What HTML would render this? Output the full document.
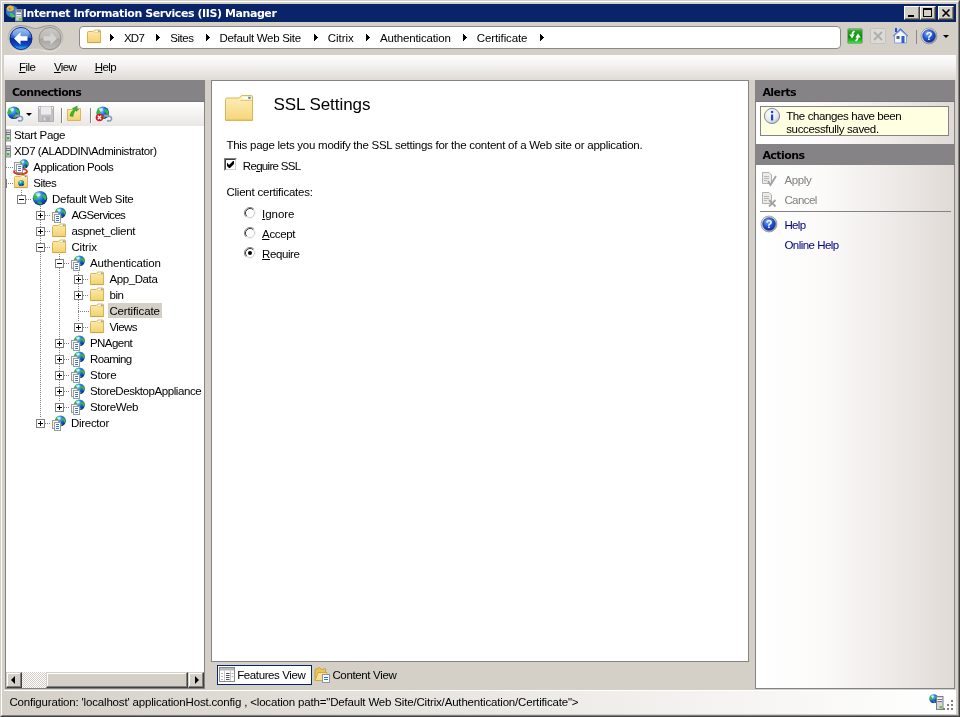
<!DOCTYPE html>
<html><head><meta charset="utf-8"><title>Internet Information Services (IIS) Manager</title>
<style>
html,body{margin:0;padding:0;}
body{width:960px;height:717px;overflow:hidden;background:#d4d0c8;position:relative;font-family:"Liberation Sans",sans-serif;font-size:11.5px;color:#000;}
.abs{position:absolute;}
svg{display:block;overflow:visible;}
.t{position:absolute;white-space:nowrap;line-height:13px;height:13px;margin-top:1px;}
.b{font-family:"DejaVu Sans","Liberation Sans",sans-serif;font-weight:bold;font-size:11px;letter-spacing:-0.45px;}
u{text-decoration:underline;text-underline-offset:1px;}
#frame{position:absolute;left:0;top:0;width:958px;height:715px;border:1px solid;border-color:#d4d0c8 #404040 #404040 #d4d0c8;}
#frame2{position:absolute;left:1px;top:1px;width:956px;height:713px;border:1px solid;border-color:#fff #808080 #808080 #fff;}
#title{position:absolute;left:4px;top:4px;width:952px;height:18px;background:#0a246a;}
.cb{position:absolute;top:6px;width:14px;height:12px;background:#d4d0c8;border:1px solid;border-color:#fff #404040 #404040 #fff;box-shadow:inset -1px -1px 0 #808080;}
#menubar{position:absolute;left:4px;top:55px;width:952px;height:25px;background:linear-gradient(#fdfdfd,#f4f3f2 40%,#dedbd6);}
.hdr{position:absolute;height:21px;background:#858386;}
.tool{position:absolute;background:linear-gradient(#fff,#e9e7e4);}
.hd{position:absolute;height:1px;background-image:repeating-linear-gradient(90deg,#808080 0 1px,transparent 1px 2px);}
.vd{position:absolute;width:1px;background-image:repeating-linear-gradient(180deg,#808080 0 1px,transparent 1px 2px);}
.ex{position:absolute;width:7px;height:7px;border:1px solid #808080;background:#fff;}
.ex i{position:absolute;left:1px;top:3px;width:5px;height:1px;background:#000;}
.ex b{position:absolute;left:3px;top:1px;width:1px;height:5px;background:#000;}
.arr{position:absolute;width:0;height:0;border-left:4px solid #000;border-top:3.5px solid transparent;border-bottom:3.5px solid transparent;top:34px;}
.sep{position:absolute;width:1px;background:#808080;box-shadow:1px 0 0 #fff;}
.sbtn{position:absolute;width:14px;height:14px;background:#d4d0c8;border:1px solid;border-color:#d4d0c8 #404040 #404040 #d4d0c8;box-shadow:inset -1px -1px 0 #808080, inset 1px 1px 0 #fff;}
.link{color:#000080;}
.dis{color:#808080;}
.rb{position:absolute;width:10px;height:10px;border-radius:50%;border:1px solid;border-color:#808080 #fff #fff #808080;background:#fff;box-shadow:inset 1px 1px 0 #404040;}
#root{position:absolute;left:0;top:0;width:960px;height:717px;will-change:transform;}
</style></head><body><div id="root">
<svg width="0" height="0" style="position:absolute">
<defs>
<radialGradient id="gG" cx="0.35" cy="0.3" r="0.75"><stop offset="0" stop-color="#d8f2ff"/><stop offset="0.25" stop-color="#4aa8f4"/><stop offset="0.6" stop-color="#1c56d6"/><stop offset="1" stop-color="#0a2590"/></radialGradient>
<linearGradient id="gF" x1="0" y1="0" x2="0" y2="1"><stop offset="0" stop-color="#fcecb0"/><stop offset="1" stop-color="#f3d171"/></linearGradient>
<linearGradient id="gP" x1="0" y1="0" x2="1" y2="0"><stop offset="0" stop-color="#f4f4f6"/><stop offset="1" stop-color="#ffffff"/></linearGradient>
<radialGradient id="gH" cx="0.4" cy="0.3" r="0.8"><stop offset="0" stop-color="#8fb6ff"/><stop offset="0.5" stop-color="#2458d8"/><stop offset="1" stop-color="#0a2490"/></radialGradient>
<radialGradient id="gI" cx="0.4" cy="0.35" r="0.7"><stop offset="0" stop-color="#ffffff"/><stop offset="0.7" stop-color="#e4e6ee"/><stop offset="1" stop-color="#a8abb8"/></radialGradient>
<linearGradient id="gBk" x1="0" y1="0" x2="0" y2="1"><stop offset="0" stop-color="#7db4f0"/><stop offset="0.45" stop-color="#2a68d0"/><stop offset="0.5" stop-color="#0a2aa0"/><stop offset="0.8" stop-color="#0c48c8"/><stop offset="1" stop-color="#38c8ff"/></linearGradient>
<linearGradient id="gFw" x1="0" y1="0" x2="0" y2="1"><stop offset="0" stop-color="#cccac6"/><stop offset="0.48" stop-color="#bab8b4"/><stop offset="0.52" stop-color="#a6a4a0"/><stop offset="1" stop-color="#c0beba"/></linearGradient>
<linearGradient id="gHalo" x1="0" y1="0" x2="0" y2="1"><stop offset="0" stop-color="#9c9994"/><stop offset="1" stop-color="#e6e4e0"/></linearGradient>
<linearGradient id="gGr" x1="0" y1="0" x2="0" y2="1"><stop offset="0" stop-color="#7ad87a"/><stop offset="0.15" stop-color="#2aa82a"/><stop offset="0.55" stop-color="#0a8a0a"/><stop offset="1" stop-color="#3ae83a"/></linearGradient>

<linearGradient id="gF2" x1="0" y1="0" x2="0" y2="1"><stop offset="0" stop-color="#fdf0be"/><stop offset="0.5" stop-color="#f9e299"/><stop offset="1" stop-color="#f5d57c"/></linearGradient>
<linearGradient id="gRing" x1="0" y1="0" x2="1" y2="1"><stop offset="0" stop-color="#f4f4f8"/><stop offset="0.5" stop-color="#c8cad2"/><stop offset="1" stop-color="#8e909c"/></linearGradient>
<symbol id="globe" viewBox="0 0 16 16">
<circle cx="8" cy="8.2" r="7.2" fill="url(#gG)"/>
<path d="M3.2 3.6 C4.5 2.4 6.2 2.2 6.6 3 C7 4 5.6 4.6 5.2 5.8 C4.8 7 6 7.6 5.4 8.8 C4.8 9.8 3.4 9.2 2.6 10.4 C1.6 8.4 1.8 5.4 3.2 3.6 Z" fill="#2fc030"/>
<path d="M10.6 4.2 C11.8 3.8 13.4 4.8 14 6.4 C14.6 8 14.2 9.6 13.4 10 C12.4 10.2 12.6 8.6 11.6 7.8 C10.6 7 9.8 6.4 10 5.4 Z" fill="#2fc030"/>
<path d="M5.4 11.6 C6.6 11 8.4 11.6 9.6 12.4 C10.4 13 10 14 8.8 14.6 C7.4 14.8 5.6 13.6 5.4 11.6 Z" fill="#28b028"/>
<ellipse cx="6" cy="4.4" rx="2.6" ry="1.8" fill="#fff" opacity="0.55"/>
</symbol>

<symbol id="sglobe" viewBox="0 0 12 12">
<circle cx="6" cy="6" r="5.6" fill="url(#gG)"/>
<path d="M1.6 3 C2.6 1.6 4.2 1.2 4.6 2 C4.8 3 3.8 3.4 3.6 4.4 C3.4 5.4 4.2 6 3.6 6.8 C3 7.4 2 7 1 7.6 C0.4 6 0.6 4.2 1.6 3 Z" fill="#2fc030"/>
<path d="M8.2 2.6 C9.4 2.4 10.6 3.4 11 4.8 C11.4 6.2 11 7.6 10.2 7.8 C9.4 7.8 9.6 6.4 8.8 5.8 C8 5.2 7.4 4.6 7.6 3.6 Z" fill="#2fc030"/>
<path d="M5.6 8.8 C6.6 8.6 7.8 9.2 8.2 10 C8.2 10.8 7.4 11.2 6.4 11.2 C5.6 10.6 5.2 9.6 5.6 8.8 Z" fill="#28b028"/>
<ellipse cx="4.4" cy="3" rx="2" ry="1.3" fill="#fff" opacity="0.6"/>
</symbol>

<symbol id="fold" viewBox="0 0 16 16">
<path d="M1.5 4.5 Q1.5 3.5 2.5 3.5 L6.8 3.5 Q7.6 3.5 8 2.8 Q8.4 2 9.2 2 L13.5 2 Q14.5 2 14.5 3 L14.5 14.5 L1.5 14.5 Z" fill="url(#gF)" stroke="#dbb252" stroke-width="1"/>
<path d="M8.2 4.6 L14 4.6" stroke="#e9c76c" stroke-width="0.8" opacity="0.8"/>
<rect x="9.4" y="2.8" width="2.6" height="1" fill="#fff"/>
<rect x="12" y="2.8" width="1.6" height="1" fill="#3f86e8"/>
<path d="M1.5 14.6 H14.5" stroke="#c9a24a" stroke-width="0.9"/>
</symbol>

<symbol id="app" viewBox="0 0 16 17">
<svg x="3.6" y="1" width="11.6" height="11.6" viewBox="0 0 12 12"><use href="#sglobe"/></svg>
<rect x="1.5" y="6.5" width="6" height="8" fill="#fbf6e6" stroke="#9a9aa6" stroke-width="1"/>
<rect x="3.5" y="8.5" width="6" height="8" fill="#fff" stroke="#9a9aa6" stroke-width="1"/>
<path d="M5 10.5 H8 M5 12.5 H8 M5 14.5 H8" stroke="#2f7be0" stroke-width="1"/>
</symbol>

<symbol id="pool" viewBox="0 0 16 17">
<svg x="6" y="1" width="10" height="10" viewBox="0 0 12 12"><use href="#sglobe"/></svg>
<ellipse cx="7.5" cy="13.6" rx="6.6" ry="2.6" fill="none" stroke="#e03818" stroke-width="1.6"/>
<rect x="1.5" y="4.5" width="6" height="8" fill="#f4f4f8" stroke="#9a9aa6"/>
<rect x="3.5" y="6.5" width="6" height="8" fill="#fff" stroke="#9a9aa6"/>
<path d="M5 8.5 H8 M5 10.5 H8 M5 12.5 H8" stroke="#2f7be0" stroke-width="1"/>
<path d="M1.2 13.2 Q2 16 7.5 16.2 Q13 16 13.9 13.2" fill="none" stroke="#e03818" stroke-width="1.5"/>
</symbol>

<symbol id="sites" viewBox="0 0 16 16">
<path d="M1.5 3.3 Q1.5 2.5 2.3 2.5 L7.2 2.5 L8.4 1.5 L13.7 1.5 Q14.5 1.5 14.5 2.3 L14.5 13.5 L1.5 13.5 Z" fill="url(#gF)" stroke="#dcb65a" stroke-width="1"/>
<rect x="9.2" y="2" width="2.6" height="1" fill="#fff"/>
<rect x="11.8" y="2" width="1.6" height="1" fill="#3f86e8"/>
<path d="M1.5 13.6 H14.5" stroke="#c9a24a" stroke-width="0.9"/>
<svg x="5" y="6" width="6.4" height="6.4" viewBox="0 0 12 12"><use href="#sglobe"/></svg>
</symbol>

<symbol id="srv" viewBox="0 0 5 16">
<rect x="0" y="4" width="4.5" height="11" fill="#d8d8dc" stroke="#8a8a92" stroke-width="1"/>
<path d="M0 6.5 H4 M0 8.5 H4" stroke="#707078" stroke-width="1"/>
<rect x="1" y="11" width="2.4" height="2.4" fill="#30c020"/>
</symbol>
</defs>
</svg>
<div id="frame"></div><div id="frame2"></div>
<div id="title"></div>
<svg class="abs" style="left:6px;top:5px" width="17" height="17" viewBox="0 0 17 17">
<circle cx="6" cy="6.5" r="6" fill="#3a78d8"/>
<path d="M0.4 4 Q1 0.8 4 0.3 L7.5 1.5 L8 5 L4.5 6.5 L1.5 5.5 Z" fill="#f0b428"/>
<path d="M2.5 3 L4 3 L5 4.5 L3.5 5 Z" fill="#38a0d8"/>
<path d="M3.5 8.5 Q5 7.5 7 9 L9.5 11.5 Q8 12.8 6 12.4 Q4 11 3.5 8.5 Z" fill="#40c840"/>
<path d="M9.5 3.5 Q11 4 11.6 6 L10 6 Z" fill="#40c840"/>
<rect x="9.5" y="4.5" width="6.5" height="11.5" fill="#c4c8d0" stroke="#8a8e9a"/>
<path d="M10.5 6 H15" stroke="#4a5060" stroke-width="1.2"/><path d="M10.5 8.5 H15 M10.5 10.5 H15" stroke="#eef0f4"/><path d="M10.5 9.5 H15" stroke="#8a8e9a"/>
<rect x="13" y="13" width="2.4" height="2.4" fill="#50e020"/>
</svg>
<div class="t b" style="left:22.8px;top:6px;color:#fff;letter-spacing:-0.422px;">Internet Information Services (IIS) Manager</div>
<div class="cb" style="left:904px"><div class="abs" style="left:3px;top:8px;width:6px;height:2px;background:#000"></div></div>
<div class="cb" style="left:920px"><div class="abs" style="left:2px;top:1px;width:7px;height:6px;border:1px solid #000;border-top-width:2px"></div></div>
<div class="cb" style="left:938px"><svg class="abs" style="left:3px;top:2px" width="8" height="8"><path d="M0.5 0.5 L7.5 7.5 M7.5 0.5 L0.5 7.5" stroke="#000" stroke-width="1.6"/></svg></div>

<!-- nav buttons -->
<svg class="abs" style="left:6px;top:24px" width="60" height="30" viewBox="0 0 60 30">
<path d="M15 1.5 C22 1.5 24 4.5 29.5 4.5 C35 4.5 37 1.5 44 1.5 A13 13 0 0 1 44 27.5 C37 27.5 35 25 29.5 25 C24 25 22 27.5 15 27.5 A13 13 0 0 1 15 1.5 Z" fill="#c9c5be" stroke="url(#gHalo)" stroke-width="1.2"/>
<circle cx="15" cy="14.5" r="11" fill="url(#gBk)" stroke="#0a2a8a" stroke-width="1"/>
<ellipse cx="15" cy="9" rx="8.5" ry="5" fill="#fff" opacity="0.25"/>
<path d="M8 14.5 L14.5 8.2 L14.5 12.3 L21.5 12.3 L21.5 16.7 L14.5 16.7 L14.5 20.8 Z" fill="#fff"/>
<circle cx="44" cy="14.5" r="11" fill="url(#gFw)" stroke="#959390" stroke-width="1"/>
<path d="M51 14.5 L44.5 8.2 L44.5 12.3 L37.5 12.3 L37.5 16.7 L44.5 16.7 L44.5 20.8 Z" fill="#d6d4d0"/>
</svg>

<!-- address box -->
<div class="abs" style="left:79px;top:26px;width:760px;height:21px;background:#fff;border:1px solid #8a8a8a;border-radius:4px;"></div>
<svg class="abs" style="left:86px;top:28px" width="16" height="16"><use href="#fold"/></svg>
<svg class="abs" style="left:110px;top:34px" width="4" height="7" shape-rendering="crispEdges"><path d="M0 0 L4 3.5 L0 7 Z" fill="#000"/></svg>
<div class="t" style="left:123.9px;top:31px;letter-spacing:-0.708px;">XD7</div>
<svg class="abs" style="left:156px;top:34px" width="4" height="7" shape-rendering="crispEdges"><path d="M0 0 L4 3.5 L0 7 Z" fill="#000"/></svg>
<div class="t" style="left:170.2px;top:31px;letter-spacing:-0.466px;">Sites</div>
<svg class="abs" style="left:206px;top:34px" width="4" height="7" shape-rendering="crispEdges"><path d="M0 0 L4 3.5 L0 7 Z" fill="#000"/></svg>
<div class="t" style="left:219.4px;top:31px;letter-spacing:-0.287px;">Default Web Site</div>
<svg class="abs" style="left:314px;top:34px" width="4" height="7" shape-rendering="crispEdges"><path d="M0 0 L4 3.5 L0 7 Z" fill="#000"/></svg>
<div class="t" style="left:327.8px;top:31px;letter-spacing:-0.034px;">Citrix</div>
<svg class="abs" style="left:366px;top:34px" width="4" height="7" shape-rendering="crispEdges"><path d="M0 0 L4 3.5 L0 7 Z" fill="#000"/></svg>
<div class="t" style="left:380.1px;top:31px;letter-spacing:-0.164px;">Authentication</div>
<svg class="abs" style="left:463px;top:34px" width="4" height="7" shape-rendering="crispEdges"><path d="M0 0 L4 3.5 L0 7 Z" fill="#000"/></svg>
<div class="t" style="left:476.8px;top:31px;letter-spacing:-0.107px;">Certificate</div>
<svg class="abs" style="left:540px;top:34px" width="4" height="7" shape-rendering="crispEdges"><path d="M0 0 L4 3.5 L0 7 Z" fill="#000"/></svg>

<!-- nav right icons -->
<svg class="abs" style="left:847px;top:28px" width="16" height="16" viewBox="0 0 16 16">
<rect x="0.5" y="0.5" width="15" height="15" rx="1.5" fill="url(#gGr)" stroke="#8fa88f"/>
<path d="M6.8 2.6 Q4.4 4 4.4 6.6 L2.2 6.6 L5 10.4 L7.8 6.6 L6.2 6.6 Q6.2 4.8 8 3.8 Z" fill="#fff"/>
<path d="M9.2 13.4 Q11.6 12 11.6 9.4 L13.8 9.4 L11 5.6 L8.2 9.4 L9.8 9.4 Q9.8 11.2 8 12.2 Z" fill="#fff"/>
</svg>
<svg class="abs" style="left:870px;top:28px" width="16" height="16" viewBox="0 0 16 16">
<rect x="0.5" y="0.5" width="15" height="15" rx="1.5" fill="#dcdad6" stroke="#c4c2be"/>
<path d="M4 4 L12 12 M12 4 L4 12" stroke="#b0aeaa" stroke-width="2"/>
</svg>
<svg class="abs" style="left:892px;top:27px" width="17" height="17" viewBox="0 0 17 17">
<rect x="3" y="1" width="2" height="4" fill="#2a50d0"/>
<path d="M8.5 1.2 L0.8 9 L2 9.6 L8.5 3.4 L15 9.6 L16.2 9 Z" fill="#3a68e0"/>
<path d="M2.5 8.6 L8.5 3.2 L14.5 8.6 L14.5 16 L2.5 16 Z" fill="#f4f6fc" stroke="#8aa0d8" stroke-width="1"/>
<rect x="4.5" y="9" width="3" height="3" fill="#586078"/>
<rect x="9.5" y="9" width="3" height="7" fill="#2a60c8"/>
</svg>
<div class="abs" style="left:916px;top:30px;width:1px;height:14px;background:#8a8a8a;"></div>
<svg class="abs" style="left:920px;top:27px" width="18" height="18" viewBox="0 0 18 18">
<circle cx="9" cy="9" r="8" fill="url(#gRing)"/><circle cx="9" cy="9" r="8" fill="none" stroke="#8a8c96" stroke-width="0.7"/>
<circle cx="9" cy="9" r="6.3" fill="url(#gH)" stroke="#1a2c80" stroke-width="0.6"/>
<text x="9" y="12.9" text-anchor="middle" font-family="Liberation Sans,sans-serif" font-weight="bold" font-size="11" fill="#fff">?</text>
</svg>
<div class="abs" style="left:943px;top:35px;width:0;height:0;border-top:3px solid #000;border-left:3px solid transparent;border-right:3px solid transparent;"></div>

<div id="menubar"></div>
<div class="t" style="left:19.0px;top:60px;letter-spacing:-0.537px;"><u>F</u>ile</div>
<div class="t" style="left:54.0px;top:60px;letter-spacing:-0.609px;"><u>V</u>iew</div>
<div class="t" style="left:94.7px;top:60px;letter-spacing:-0.58px;"><u>H</u>elp</div>

<!-- left panel -->
<div class="abs" style="left:5px;top:80px;width:200px;height:609px;background:#fff;border:1px solid #848284;border-top:0;box-sizing:border-box;"></div>
<div class="hdr" style="left:5px;top:80px;width:200px;height:22px;border-bottom:1px solid #767477;box-sizing:border-box;"></div>
<div class="t b" style="left:11.9px;top:85px;letter-spacing:-0.632px;">Connections</div>
<div class="tool" style="left:6px;top:102px;width:198px;height:24px;"></div>
<!-- toolbar icons -->
<svg class="abs" style="left:7px;top:106px" width="18" height="17" viewBox="0 0 18 17">
<svg x="0" y="0" width="13.5" height="13.5" viewBox="0 0 12 12"><use href="#sglobe"/></svg>
<path d="M8 8.5 L12.5 8.5 L12.5 11 L8 11 Z" fill="#98a4b8" stroke="#6a7894" stroke-width="0.8"/>
<path d="M12.5 10 Q16 10.5 15.5 13.5 Q14.5 15.8 11 14.5" fill="none" stroke="#7f9cc8" stroke-width="1.6"/>
</svg>
<div class="abs" style="left:26px;top:113px;width:0;height:0;border-top:3px solid #000;border-left:3px solid transparent;border-right:3px solid transparent;"></div>
<svg class="abs" style="left:38px;top:106px" width="16" height="16" viewBox="0 0 16 16">
<path d="M0.5 0.5 H15.5 V15.5 H0.5 Z" fill="#c4c2c4" stroke="#b0aeb0"/>
<rect x="3" y="0.5" width="10" height="8" fill="#ecebee"/>
<rect x="4" y="10.5" width="8" height="5" fill="#b4b2b4"/>
<rect x="5.5" y="11.5" width="2" height="3" fill="#dcdadc"/>
<rect x="1" y="1" width="1" height="1.5" fill="#fff"/><rect x="14" y="1" width="1" height="1.5" fill="#fff"/>
</svg>
<div class="sep" style="left:61px;top:108px;height:15px;"></div>
<svg class="abs" style="left:66px;top:105px" width="16" height="17" viewBox="0 0 16 17">
<path d="M1.5 4.5 L7 4.5 L8 3.5 L14.5 3.5 L14.5 15.5 L1.5 15.5 Z" fill="url(#gF)" stroke="#dcb65a"/>
<rect x="10" y="4.2" width="3" height="1" fill="#3f86e8"/>
<path d="M4 11 C4.5 7 6.5 5.5 8 4.5 L6.4 3.4 L11.2 1 L11 6.4 L9.6 5.4 C8.4 6.6 7.4 8.4 7 11.4 Z" fill="#3cb828" stroke="#2a9018" stroke-width="0.5"/>
</svg>
<div class="sep" style="left:90px;top:108px;height:15px;"></div>
<svg class="abs" style="left:95px;top:106px" width="18" height="17" viewBox="0 0 18 17">
<svg x="1" y="0" width="13.5" height="13.5" viewBox="0 0 12 12"><use href="#sglobe"/></svg>
<path d="M9 8.5 L13.5 8.5 L13.5 11 L9 11 Z" fill="#98a4b8" stroke="#6a7894" stroke-width="0.8"/>
<path d="M13.5 10 Q17 10.5 16.5 13.5 Q15.5 15.8 12 14.5" fill="none" stroke="#7f9cc8" stroke-width="1.6"/>
<circle cx="4.5" cy="11.5" r="3.8" fill="#d81828"/>
<path d="M2.8 9.8 L6.2 13.2 M6.2 9.8 L2.8 13.2" stroke="#fff" stroke-width="1.3"/>
</svg>

<div class="abs" style="left:6px;top:179px;width:1px;height:9px;background:#808080;"></div>
<div class="hd" style="left:6px;top:167px;width:7px"></div>
<div class="hd" style="left:6px;top:183px;width:7px"></div>
<div class="vd" style="left:21px;top:190px;height:5px"></div>
<div class="hd" style="left:26px;top:199px;width:6px"></div>
<div class="vd" style="left:40px;top:206px;height:212px"></div>
<div class="hd" style="left:45px;top:215px;width:6px"></div>
<div class="hd" style="left:45px;top:231px;width:6px"></div>
<div class="hd" style="left:45px;top:247px;width:6px"></div>
<div class="hd" style="left:45px;top:423px;width:6px"></div>
<div class="vd" style="left:59px;top:254px;height:148px"></div>
<div class="hd" style="left:64px;top:263px;width:6px"></div>
<div class="hd" style="left:64px;top:343px;width:6px"></div>
<div class="hd" style="left:64px;top:359px;width:6px"></div>
<div class="hd" style="left:64px;top:375px;width:6px"></div>
<div class="hd" style="left:64px;top:391px;width:6px"></div>
<div class="hd" style="left:64px;top:407px;width:6px"></div>
<div class="vd" style="left:78px;top:270px;height:52px"></div>
<div class="hd" style="left:83px;top:279px;width:6px"></div>
<div class="hd" style="left:83px;top:295px;width:6px"></div>
<div class="hd" style="left:83px;top:327px;width:6px"></div>
<div class="hd" style="left:78px;top:311px;width:11px"></div>
<svg class="abs" style="left:6px;top:126px" width="5" height="16"><use href="#srv"/></svg>
<div class="t" style="left:14.0px;top:128px;letter-spacing:-0.314px;">Start Page</div>
<svg class="abs" style="left:6px;top:142px" width="5" height="16"><use href="#srv"/></svg>
<div class="t" style="left:14.0px;top:144px;letter-spacing:-0.423px;">XD7 (ALADDIN&#92;Administrator)</div>
<svg class="abs" style="left:13px;top:158px" width="16" height="17"><use href="#pool"/></svg>
<div class="t" style="left:33.3px;top:160px;letter-spacing:-0.478px;">Application Pools</div>
<svg class="abs" style="left:13px;top:174px" width="16" height="16"><use href="#sites"/></svg>
<div class="t" style="left:33.3px;top:176px;letter-spacing:-0.556px;">Sites</div>
<svg class="abs" style="left:32px;top:190px" width="16" height="16"><use href="#globe"/></svg>
<div class="ex" style="left:17px;top:195px"><i></i></div>
<div class="t" style="left:52.1px;top:192px;letter-spacing:-0.3px;">Default Web Site</div>
<svg class="abs" style="left:51px;top:206px" width="16" height="17"><use href="#app"/></svg>
<div class="ex" style="left:36px;top:211px"><i></i><b></b></div>
<div class="t" style="left:71.4px;top:208px;letter-spacing:-0.692px;">AGServices</div>
<svg class="abs" style="left:51px;top:222px" width="16" height="16"><use href="#fold"/></svg>
<div class="ex" style="left:36px;top:227px"><i></i><b></b></div>
<div class="t" style="left:71.4px;top:224px;letter-spacing:-0.306px;">aspnet_client</div>
<svg class="abs" style="left:51px;top:238px" width="16" height="16"><use href="#fold"/></svg>
<div class="ex" style="left:36px;top:243px"><i></i></div>
<div class="t" style="left:71.4px;top:240px;letter-spacing:-0.134px;">Citrix</div>
<svg class="abs" style="left:70px;top:254px" width="16" height="17"><use href="#app"/></svg>
<div class="ex" style="left:55px;top:259px"><i></i></div>
<div class="t" style="left:90.0px;top:256px;letter-spacing:-0.156px;">Authentication</div>
<svg class="abs" style="left:89px;top:270px" width="16" height="16"><use href="#fold"/></svg>
<div class="ex" style="left:74px;top:275px"><i></i><b></b></div>
<div class="t" style="left:109.4px;top:272px;letter-spacing:-0.395px;">App_Data</div>
<svg class="abs" style="left:89px;top:286px" width="16" height="16"><use href="#fold"/></svg>
<div class="ex" style="left:74px;top:291px"><i></i><b></b></div>
<div class="t" style="left:109.4px;top:288px;letter-spacing:-0.386px;">bin</div>
<div class="abs" style="left:108px;top:303px;width:54px;height:15px;background:#d4d0c8;"></div>
<svg class="abs" style="left:89px;top:302px" width="16" height="16"><use href="#fold"/></svg>
<div class="t" style="left:109.4px;top:304px;letter-spacing:-0.126px;">Certificate</div>
<svg class="abs" style="left:89px;top:318px" width="16" height="16"><use href="#fold"/></svg>
<div class="ex" style="left:74px;top:323px"><i></i><b></b></div>
<div class="t" style="left:109.4px;top:320px;letter-spacing:-0.614px;">Views</div>
<svg class="abs" style="left:70px;top:334px" width="16" height="17"><use href="#app"/></svg>
<div class="ex" style="left:55px;top:339px"><i></i><b></b></div>
<div class="t" style="left:90.0px;top:336px;letter-spacing:-0.562px;">PNAgent</div>
<svg class="abs" style="left:70px;top:350px" width="16" height="17"><use href="#app"/></svg>
<div class="ex" style="left:55px;top:355px"><i></i><b></b></div>
<div class="t" style="left:90.0px;top:352px;letter-spacing:-0.647px;">Roaming</div>
<svg class="abs" style="left:70px;top:366px" width="16" height="17"><use href="#app"/></svg>
<div class="ex" style="left:55px;top:371px"><i></i><b></b></div>
<div class="t" style="left:90.0px;top:368px;letter-spacing:-0.22px;">Store</div>
<svg class="abs" style="left:70px;top:382px" width="16" height="17"><use href="#app"/></svg>
<div class="ex" style="left:55px;top:387px"><i></i><b></b></div>
<div class="t" style="left:90.0px;top:384px;letter-spacing:-0.428px;">StoreDesktopAppliance</div>
<svg class="abs" style="left:70px;top:398px" width="16" height="17"><use href="#app"/></svg>
<div class="ex" style="left:55px;top:403px"><i></i><b></b></div>
<div class="t" style="left:90.0px;top:400px;letter-spacing:-0.355px;">StoreWeb</div>
<svg class="abs" style="left:51px;top:414px" width="16" height="17"><use href="#app"/></svg>
<div class="ex" style="left:36px;top:419px"><i></i><b></b></div>
<div class="t" style="left:70.9px;top:416px;letter-spacing:-0.271px;">Director</div>

<!-- h scrollbar -->
<div class="abs" style="left:6px;top:672px;width:198px;height:16px;background:#e9e7e3;background-image:repeating-conic-gradient(#fff 0 25%,#d4d0c8 0 50%);background-size:2px 2px;"></div>
<div class="sbtn" style="left:6px;top:672px;"></div>
<div class="abs" style="left:11px;top:676px;width:0;height:0;border-right:4px solid #000;border-top:4px solid transparent;border-bottom:4px solid transparent;"></div>
<div class="sbtn" style="left:46px;top:672px;width:140px;"></div>
<div class="sbtn" style="left:188px;top:672px;"></div>
<div class="abs" style="left:195px;top:676px;width:0;height:0;border-left:4px solid #000;border-top:4px solid transparent;border-bottom:4px solid transparent;"></div>

<!-- center -->
<div class="abs" style="left:211px;top:80px;width:536px;height:580px;background:#fff;border:1px solid #848284;"></div>
<svg class="abs" style="left:225px;top:95px" width="28" height="26" viewBox="0 0 28 26">
<path d="M0.5 4.5 Q0.5 3 2 3 L13.2 3 Q14.4 3 15 2 Q15.9 0.5 17.2 0.5 L26 0.5 Q27.5 0.5 27.5 2 L27.5 25.5 L0.5 25.5 Z" fill="url(#gF2)" stroke="#dbb558" stroke-width="1"/>
<path d="M15.5 5.5 H27" stroke="#e8c66e" stroke-width="1" opacity="0.9"/>
<path d="M1.5 24.5 H26.5" stroke="#ecc766" stroke-width="1"/>
<rect x="17.5" y="1.8" width="6" height="2" fill="#fff"/><rect x="23.2" y="1.8" width="2.4" height="2" fill="#3f86e8"/>
</svg>
<div class="t" style="left:273.4px;top:93px;font-size:17px;line-height:21px;height:21px;letter-spacing:-0.055px;">SSL Settings</div>
<div class="t" style="left:226.4px;top:138px;letter-spacing:-0.256px;">This page lets you modify the SSL settings for the content of a Web site or application.</div>
<div class="abs" style="left:224px;top:158px;width:13px;height:13px;box-sizing:border-box;background:#fff;border:1px solid;border-color:#808080 #fff #fff #808080;"><div class="abs" style="left:0;top:0;width:9px;height:9px;border:1px solid;border-color:#404040 #d4d0c8 #d4d0c8 #404040;"></div></div>
<svg class="abs" style="left:227px;top:161px" width="7" height="7" viewBox="0 0 7 7"><path d="M0 2 L0 5 L2 7 L3 7 L7 3 L7 0 L6 0 L2.5 3.5 L2 4 L0.5 2 Z" fill="#000"/></svg>
<div class="t" style="left:242.8px;top:159px;letter-spacing:-0.693px;">Re<u>q</u>uire SSL</div>
<div class="t" style="left:226.4px;top:185px;letter-spacing:-0.218px;">Client certificates:</div>
<svg class="abs" style="left:244px;top:207px" width="12" height="12" viewBox="0 0 12 12"><circle cx="6" cy="6" r="5" fill="#fff"/><path d="M2.11 9.89 A5.5 5.5 0 0 1 9.89 2.11" fill="none" stroke="#808080"/><path d="M9.89 2.11 A5.5 5.5 0 0 1 2.11 9.89" fill="none" stroke="#f4f2ee"/><path d="M2.82 9.18 A4.5 4.5 0 0 1 9.18 2.82" fill="none" stroke="#404040"/><path d="M9.18 2.82 A4.5 4.5 0 0 1 2.82 9.18" fill="none" stroke="#d4d0c8"/></svg>
<div class="t" style="left:262.1px;top:207px;letter-spacing:-0.054px;"><u>I</u>gnore</div>
<svg class="abs" style="left:244px;top:227px" width="12" height="12" viewBox="0 0 12 12"><circle cx="6" cy="6" r="5" fill="#fff"/><path d="M2.11 9.89 A5.5 5.5 0 0 1 9.89 2.11" fill="none" stroke="#808080"/><path d="M9.89 2.11 A5.5 5.5 0 0 1 2.11 9.89" fill="none" stroke="#f4f2ee"/><path d="M2.82 9.18 A4.5 4.5 0 0 1 9.18 2.82" fill="none" stroke="#404040"/><path d="M9.18 2.82 A4.5 4.5 0 0 1 2.82 9.18" fill="none" stroke="#d4d0c8"/></svg>
<div class="t" style="left:262.1px;top:227px;letter-spacing:-0.345px;"><u>A</u>ccept</div>
<svg class="abs" style="left:244px;top:247px" width="12" height="12" viewBox="0 0 12 12"><circle cx="6" cy="6" r="5" fill="#fff"/><path d="M2.11 9.89 A5.5 5.5 0 0 1 9.89 2.11" fill="none" stroke="#808080"/><path d="M9.89 2.11 A5.5 5.5 0 0 1 2.11 9.89" fill="none" stroke="#f4f2ee"/><path d="M2.82 9.18 A4.5 4.5 0 0 1 9.18 2.82" fill="none" stroke="#404040"/><path d="M9.18 2.82 A4.5 4.5 0 0 1 2.82 9.18" fill="none" stroke="#d4d0c8"/><circle cx="6" cy="6" r="2" fill="#000"/></svg>
<div class="t" style="left:262.1px;top:247px;letter-spacing:-0.426px;"><u>R</u>equire</div>

<!-- bottom tabs -->
<div class="abs" style="left:217px;top:665px;width:93px;height:18px;background:#fff;border:1px solid #0a246a;"></div>
<svg class="abs" style="left:219px;top:667px" width="16" height="15" viewBox="0 0 16 15">
<rect x="0.5" y="0.5" width="15" height="14" fill="#fff" stroke="#8a8a92"/>
<rect x="1" y="1" width="14" height="2.5" fill="#b8b8c0"/>
<path d="M5.5 3.5 V14 M11.5 3.5 V14" stroke="#c8c8d0" stroke-width="1"/>
<path d="M2 6.5 H4 M2 9.5 H4 M2 12.5 H4 M12.5 6.5 H14.5 M12.5 9.5 H14.5" stroke="#b0b0b8"/>
<path d="M7 6.5 H10.5 M7 8.5 H10.5 M7 10.5 H10.5 M7 12.5 H10.5" stroke="#505058"/>
</svg>
<div class="t" style="left:237.2px;top:668px;letter-spacing:-0.392px;">Features View</div>
<svg class="abs" style="left:314px;top:666px" width="17" height="17" viewBox="0 0 17 17">
<path d="M1 3.5 L5.5 1.5 L7.5 3.5 L11.5 2.5 L11.5 13.5 L1 14.5 Z" fill="#e8c45c" stroke="#c49a30" stroke-width="0.8"/>
<path d="M1 14.5 L4 6.5 L13 6.5 L10.5 14.5 Z" fill="#f8e08c" stroke="#c8a040" stroke-width="0.8"/>
<rect x="8.5" y="8.5" width="7" height="8" fill="#fff" stroke="#8a94b0"/>
<path d="M10 11.5 H14 M10 13.5 H14" stroke="#3070e0"/>
</svg>
<div class="t" style="left:332.4px;top:668px;letter-spacing:-0.35px;">Content View</div>

<!-- right -->
<div class="abs" style="left:755px;top:80px;width:200px;height:609px;background:linear-gradient(90deg,#fff,#fbfaf9 35%,#ebe7e4 75%,#e0dad6);border:1px solid #848284;box-sizing:border-box;"></div>
<div class="hdr" style="left:755px;top:80px;width:200px;height:22px;border-bottom:1px solid #767477;box-sizing:border-box;"></div>
<div class="t b" style="left:762.4px;top:85px;letter-spacing:-0.581px;">Alerts</div>
<div class="abs" style="left:760px;top:106px;width:187px;height:28px;background:#ffffe1;border:1px solid #848284;"></div>
<svg class="abs" style="left:763px;top:107px" width="18" height="18" viewBox="0 0 18 18">
<circle cx="9" cy="9" r="7.6" fill="url(#gI)" stroke="#8a8e9c" stroke-width="1"/>
<rect x="8" y="7.5" width="2.2" height="6" fill="#1848c8"/><circle cx="9.1" cy="5" r="1.3" fill="#1848c8"/>
</svg>
<div class="t" style="left:786.2px;top:109px;letter-spacing:-0.391px;">The changes have been</div>
<div class="t" style="left:786.2px;top:122px;letter-spacing:-0.341px;">successfully saved.</div>
<div class="hdr" style="left:755px;top:144px;width:200px;"></div>
<div class="t b" style="left:762.4px;top:148px;letter-spacing:-0.571px;">Actions</div>
<svg class="abs" style="left:761px;top:171px" width="17" height="17" viewBox="0 0 17 17">
<path d="M1.5 1.5 H8 L10.5 4 V12.5 H1.5 Z" fill="#ecebea" stroke="#b4b2b0"/>
<path d="M3 5.5 H8 M3 7.5 H8 M3 9.5 H6" stroke="#b8b6b4"/>
<path d="M7 10 L9.5 14 L15 5" fill="none" stroke="#a4a2a0" stroke-width="1.8"/>
</svg>
<div class="t dis" style="left:784.4px;top:173px;letter-spacing:-0.356px;">Apply</div>
<svg class="abs" style="left:761px;top:191px" width="17" height="17" viewBox="0 0 17 17">
<path d="M1.5 1.5 H8 L10.5 4 V12.5 H1.5 Z" fill="#ecebea" stroke="#b4b2b0"/>
<path d="M3 5.5 H8 M3 7.5 H8 M3 9.5 H6" stroke="#b8b6b4"/>
<path d="M8 9 L14.5 15.5 M14.5 9 L8 15.5" fill="none" stroke="#a4a2a0" stroke-width="1.8"/>
</svg>
<div class="t dis" style="left:784.4px;top:193px;letter-spacing:-0.585px;">Cancel</div>
<div class="abs" style="left:760px;top:211px;width:191px;height:1px;background:#848284;"></div>
<svg class="abs" style="left:760px;top:215px" width="18" height="18" viewBox="0 0 18 18">
<circle cx="9" cy="9" r="8" fill="url(#gRing)"/><circle cx="9" cy="9" r="8" fill="none" stroke="#8a8c96" stroke-width="0.7"/>
<circle cx="9" cy="9" r="6.3" fill="url(#gH)" stroke="#1a2c80" stroke-width="0.6"/>
<text x="9" y="12.9" text-anchor="middle" font-family="Liberation Sans,sans-serif" font-weight="bold" font-size="11" fill="#fff">?</text>
</svg>
<div class="t link" style="left:784.4px;top:218px;letter-spacing:-0.614px;">Help</div>
<div class="t link" style="left:784.4px;top:238px;letter-spacing:-0.527px;">Online Help</div>

<!-- status -->
<div class="abs" style="left:4px;top:691px;width:952px;height:23px;background:linear-gradient(90deg,#d4d0c8,#fff);"></div>
<div class="abs" style="left:4px;top:690px;width:952px;height:1px;background:#fff;"></div>
<div class="t" style="left:9.4px;top:695px;letter-spacing:-0.174px;">Configuration: 'localhost' applicationHost.config , &lt;location path="Default Web Site/Citrix/Authentication/Certificate"&gt;</div>
<svg class="abs" style="left:929px;top:694px" width="15" height="16" viewBox="0 0 15 16">
<svg x="0" y="0" width="9.5" height="9.5" viewBox="0 0 12 12"><use href="#sglobe"/></svg>
<rect x="7.5" y="2.5" width="6.5" height="13" fill="#d4d6dc" stroke="#7a7e8c"/>
<path d="M8.5 4.5 H13 M8.5 6.5 H13" stroke="#fff"/><path d="M8.5 5.5 H13 M8.5 7.5 H13" stroke="#707684"/>
<rect x="10.5" y="12" width="2.5" height="2.5" fill="#58d020"/>
</svg>
<div class="abs" style="left:951px;top:700px;width:2px;height:2px;background:#808080;box-shadow:0 4px 0 #808080,-4px 4px 0 #808080,0 8px 0 #808080,-4px 8px 0 #808080,-8px 8px 0 #808080;"></div>
</div></body></html>
